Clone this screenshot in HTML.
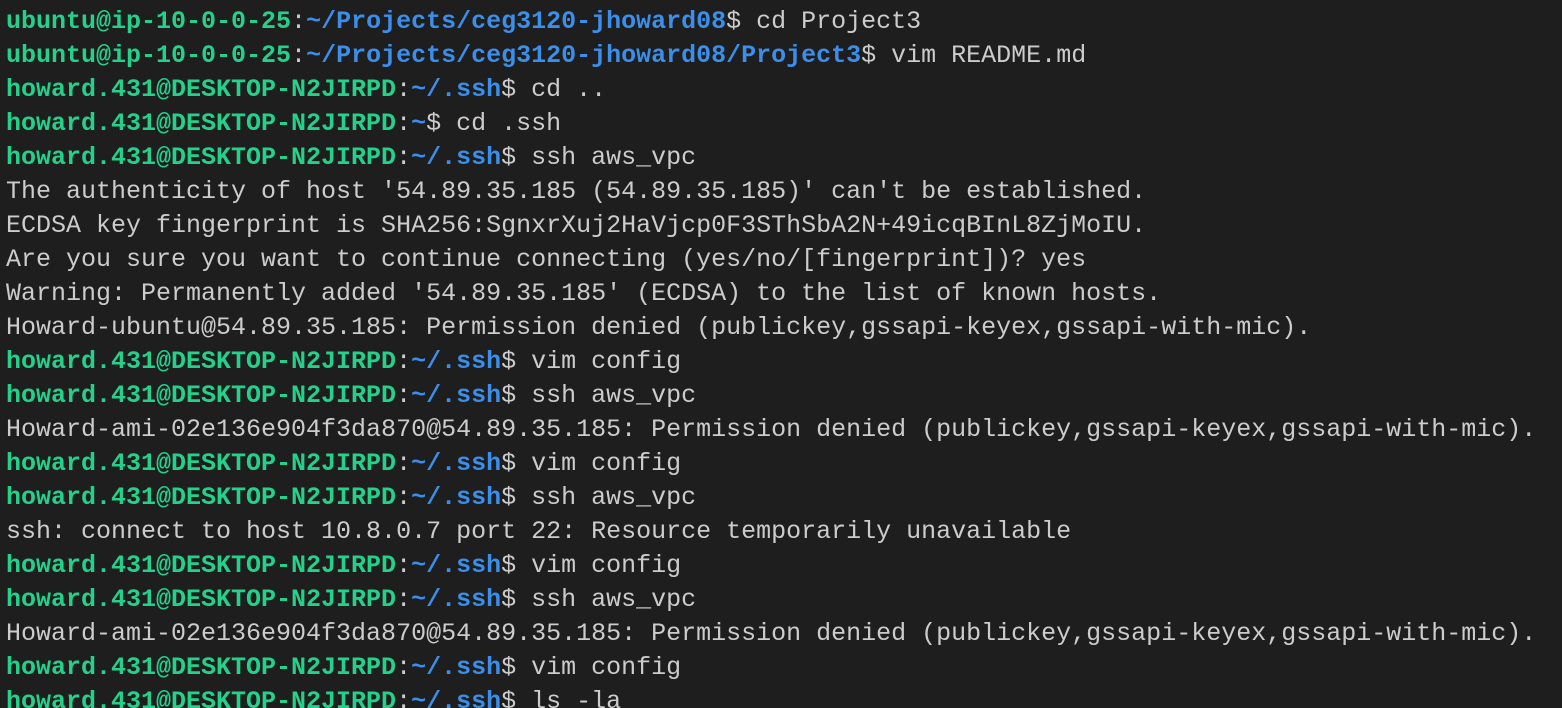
<!DOCTYPE html>
<html><head><style>
html,body{margin:0;padding:0;background:#1e1e1e;width:1562px;height:708px;overflow:hidden}
pre{margin:0;padding:5px 0 0 6px;font-family:"Liberation Mono",monospace;font-size:25px;line-height:34px;color:#cccccc;white-space:pre}
.g{color:#23d18b;font-weight:bold}.b{color:#3b8eea;font-weight:bold}
</style></head><body><pre><span class="g">ubuntu@ip-10-0-0-25</span>:<span class="b">~/Projects/ceg3120-jhoward08</span>$ cd Project3
<span class="g">ubuntu@ip-10-0-0-25</span>:<span class="b">~/Projects/ceg3120-jhoward08/Project3</span>$ vim README.md
<span class="g">howard.431@DESKTOP-N2JIRPD</span>:<span class="b">~/.ssh</span>$ cd ..
<span class="g">howard.431@DESKTOP-N2JIRPD</span>:<span class="b">~</span>$ cd .ssh
<span class="g">howard.431@DESKTOP-N2JIRPD</span>:<span class="b">~/.ssh</span>$ ssh aws_vpc
The authenticity of host '54.89.35.185 (54.89.35.185)' can't be established.
ECDSA key fingerprint is SHA256:SgnxrXuj2HaVjcp0F3SThSbA2N+49icqBInL8ZjMoIU.
Are you sure you want to continue connecting (yes/no/[fingerprint])? yes
Warning: Permanently added '54.89.35.185' (ECDSA) to the list of known hosts.
Howard-ubuntu@54.89.35.185: Permission denied (publickey,gssapi-keyex,gssapi-with-mic).
<span class="g">howard.431@DESKTOP-N2JIRPD</span>:<span class="b">~/.ssh</span>$ vim config
<span class="g">howard.431@DESKTOP-N2JIRPD</span>:<span class="b">~/.ssh</span>$ ssh aws_vpc
Howard-ami-02e136e904f3da870@54.89.35.185: Permission denied (publickey,gssapi-keyex,gssapi-with-mic).
<span class="g">howard.431@DESKTOP-N2JIRPD</span>:<span class="b">~/.ssh</span>$ vim config
<span class="g">howard.431@DESKTOP-N2JIRPD</span>:<span class="b">~/.ssh</span>$ ssh aws_vpc
ssh: connect to host 10.8.0.7 port 22: Resource temporarily unavailable
<span class="g">howard.431@DESKTOP-N2JIRPD</span>:<span class="b">~/.ssh</span>$ vim config
<span class="g">howard.431@DESKTOP-N2JIRPD</span>:<span class="b">~/.ssh</span>$ ssh aws_vpc
Howard-ami-02e136e904f3da870@54.89.35.185: Permission denied (publickey,gssapi-keyex,gssapi-with-mic).
<span class="g">howard.431@DESKTOP-N2JIRPD</span>:<span class="b">~/.ssh</span>$ vim config
<span class="g">howard.431@DESKTOP-N2JIRPD</span>:<span class="b">~/.ssh</span>$ ls -la
</pre></body></html>
